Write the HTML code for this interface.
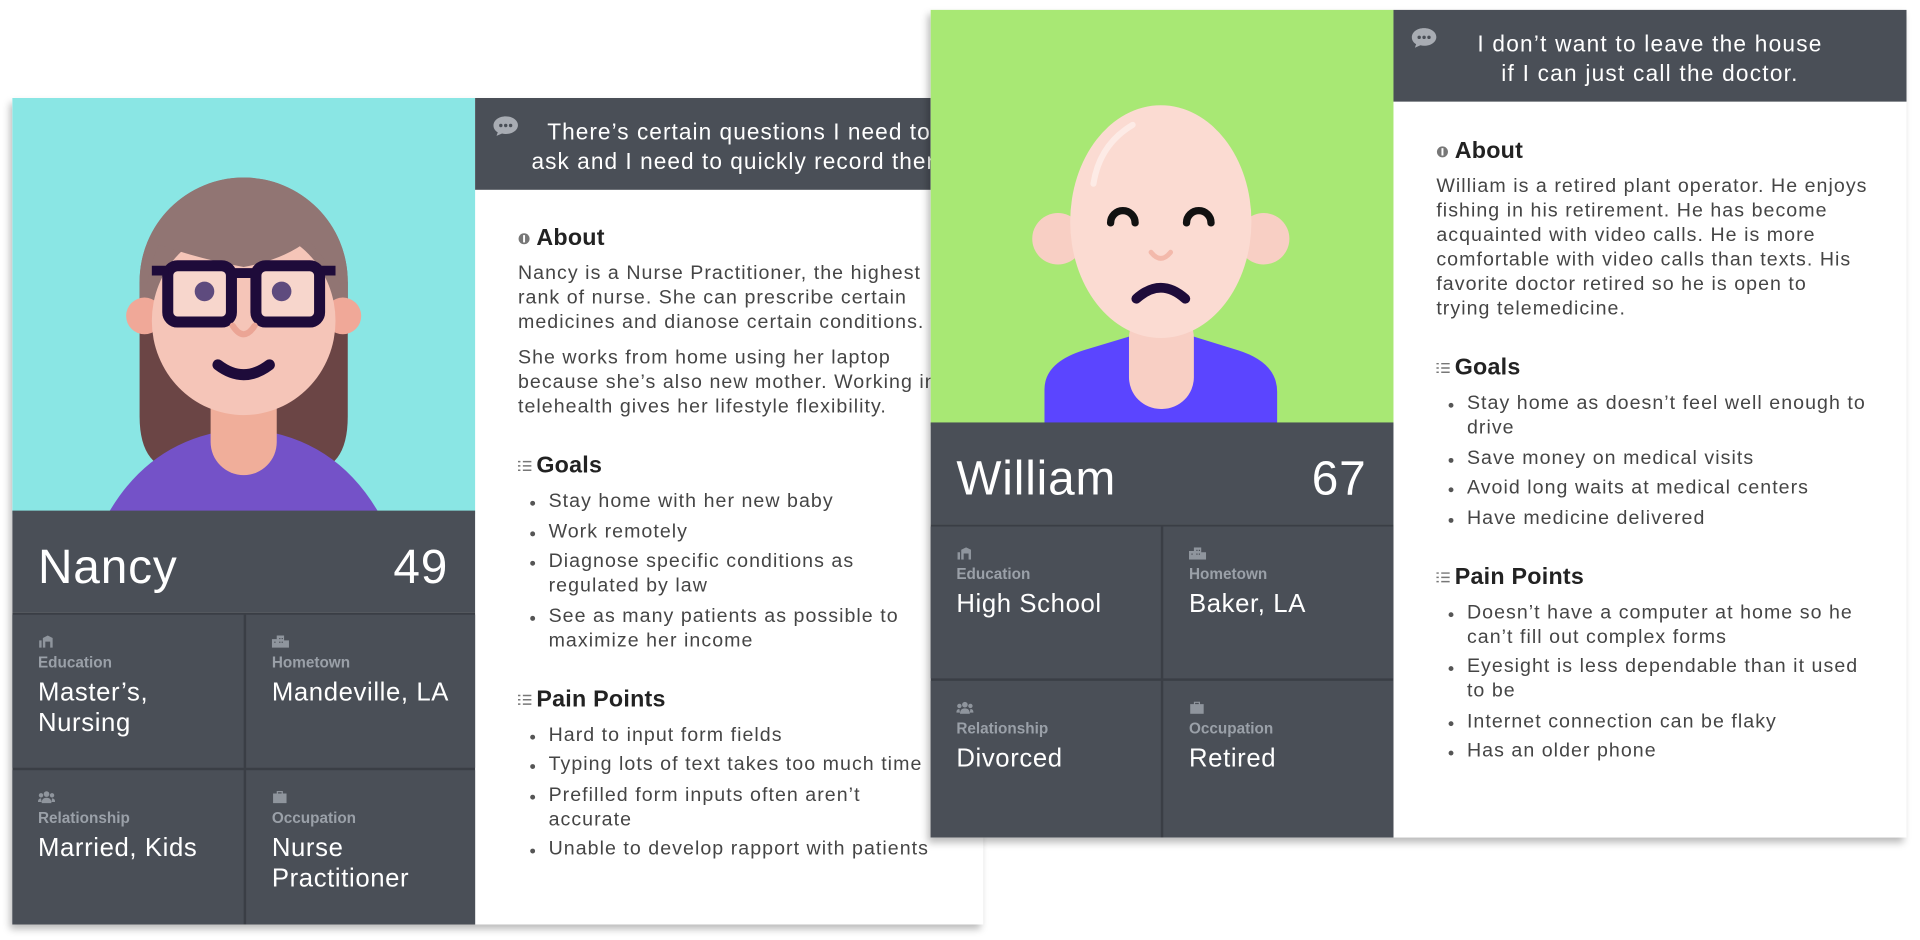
<!DOCTYPE html>
<html><head><meta charset="utf-8"><style>
*{margin:0;padding:0;box-sizing:border-box}
body{width:1920px;height:940px;background:#fff;overflow:hidden;font-family:"Liberation Sans",sans-serif}
#s{position:absolute;left:0;top:0;width:1568px;height:768px;transform:scale(1.22449);transform-origin:0 0}
.card{position:absolute;background:#fff;box-shadow:-2px 4px 6px rgba(0,0,0,.28);overflow:hidden}
.photo{position:absolute;left:0;top:0;width:378px;height:340px}
.quote{position:absolute;left:378px;top:0;height:75px;background:#4a4f57;color:#fff;font-size:18.5px;line-height:24px;text-align:center;padding-top:16px;white-space:nowrap;letter-spacing:.85px}
.qi{position:absolute;left:14px;top:14px}
.name{position:absolute;left:0;top:337px;width:378px;height:83px;background:#4a4f57;color:#fff;font-size:39px;display:flex;justify-content:space-between;align-items:center;padding:10px 22px 0 21px;letter-spacing:.7px}
.grid{position:absolute;left:0;width:378px;background:#3a3e45}
.cell{position:absolute;background:#4a4f57;padding:14px 0 0 21px;color:#fff}
.lab{font-size:12.5px;font-weight:bold;color:#9aa0a8;margin-top:0}
.ic{height:10px}
.val{font-size:21px;line-height:25px;margin-top:5px;letter-spacing:.5px}
.content{position:absolute;left:413px;color:#454545;font-size:16px;white-space:nowrap;letter-spacing:.85px}
.h{font-size:19px;font-weight:bold;color:#222;line-height:20px;margin-bottom:9px;position:relative;letter-spacing:.2px;padding-left:15px}
.h svg{position:absolute;left:0;top:5px}
.p{line-height:20px;margin-bottom:9px}
.sec{margin-top:28px}
ul{list-style:none;padding-left:25px}
li{line-height:20px;margin-bottom:4.5px;position:relative}
li:before{content:"";position:absolute;left:-15px;top:9px;width:4px;height:4px;border-radius:50%;background:#555}
</style></head><body>
<div id="s">

<!-- Nancy card -->
<div class="card" style="left:10px;top:80px;width:793px;height:675px">
  <div class="photo" style="background:#8ae6e4">
    <svg width="378" height="340" viewBox="10 80 378 340">
      <path d="M114,230 L114,340 Q114,385 150,385 L250,385 Q284,385 284,340 L284,230 Z" fill="#6b4545"/>
      <path d="M114,250 L114,230 A85,85 0 0 1 284,230 L284,250 Z" fill="#917573"/>
      <path d="M88,420 Q125,355 199,350 Q273,355 310,420 Z" fill="#7452c8"/>
      <circle cx="118" cy="258" r="15" fill="#f0a898"/>
      <circle cx="280" cy="258" r="15" fill="#f0a898"/>
      <rect x="172" y="290" width="54" height="98" rx="27" fill="#f0ae9a"/>
      <ellipse cx="199" cy="262" rx="75" ry="77" fill="#f5c5b8"/>
      <path d="M120,232 Q126,205 130,200 Q165,212 199,218 Q232,212 252,196 Q268,214 278,232 L284,230 A85,85 0 0 0 114,230 Z" fill="#917573"/>
      <rect x="137" y="217" width="52" height="46" rx="8" fill="#f7d6cc" stroke="#1e0b3a" stroke-width="9"/>
      <rect x="209" y="217" width="52" height="46" rx="8" fill="#f7d6cc" stroke="#1e0b3a" stroke-width="9"/>
      <path d="M186,223 L212,223 M124,221 L138,221 M260,221 L274,221" stroke="#1e0b3a" stroke-width="8"/>
      <circle cx="167" cy="238" r="8" fill="#5e4b7e"/>
      <circle cx="230" cy="238" r="8" fill="#5e4b7e"/>
      <path d="M190,266 Q199,280 208,266" stroke="#eba595" stroke-width="5" fill="none" stroke-linecap="round"/>
      <path d="M178,298 Q199,314 220,298" stroke="#1e0b3a" stroke-width="9" fill="none" stroke-linecap="round"/>
    </svg>
  </div>
  <div class="name"><span>Nancy</span><span>49</span></div>
  <div class="grid" style="top:420px;height:255px">
    <div class="cell" style="left:0;top:2px;width:189px;height:125px"><svg class="ic" width="14" height="10"><path d="M1,10V4h2v6zM4,10V2l4-2 4,2v8h-2V5H6v5z" fill="#8f959d"/></svg><div class="lab">Education</div><div class="val">Master’s,<br>Nursing</div></div>
    <div class="cell" style="left:191px;top:2px;width:187px;height:125px"><svg class="ic" width="14" height="10"><path d="M0,10V3h4V0h6v4h4v6zM2,5v1h1V5zM6,2v1h1V2zM8,2v1h1V2zM6,5v1h1V5zM8,5v1h1V5z" fill="#8f959d"/></svg><div class="lab">Hometown</div><div class="val">Mandeville, LA</div></div>
    <div class="cell" style="left:0;top:129px;width:189px;height:126px"><svg class="ic" width="14" height="10"><circle cx="7" cy="2.5" r="2.3" fill="#8f959d"/><circle cx="2.5" cy="3.5" r="1.8" fill="#8f959d"/><circle cx="11.5" cy="3.5" r="1.8" fill="#8f959d"/><path d="M3,10Q3,5.5 7,5.5Q11,5.5 11,10zM0,9Q0,6 2.5,6L3,9zM14,9Q14,6 11.5,6L11,9z" fill="#8f959d"/></svg><div class="lab">Relationship</div><div class="val">Married, Kids</div></div>
    <div class="cell" style="left:191px;top:129px;width:187px;height:126px"><svg class="ic" width="14" height="10"><path d="M4,2V0h5v2h3v8H1V2zM5,1v1h3V1z" fill="#8f959d"/></svg><div class="lab">Occupation</div><div class="val">Nurse<br>Practitioner</div></div>
  </div>
  <div class="quote" style="width:415px;padding-left:16px"><svg class="qi" width="22" height="18"><path d="M11,1C5,1 1,4.5 1,8.5C1,11 2.5,13 4.5,14L3.5,17L8,15C9,15.3 10,15.4 11,15.4C17,15.4 21,12 21,8.2C21,4.5 17,1 11,1Z" fill="#a8acb3"/><circle cx="7" cy="8.5" r="1.4" fill="#4a4f57"/><circle cx="11" cy="8.5" r="1.4" fill="#4a4f57"/><circle cx="15" cy="8.5" r="1.4" fill="#4a4f57"/></svg>There’s certain questions I need to<br>ask and I need to quickly record them</div>
  <div class="content" style="top:105px">
    <div class="h"><svg width="10" height="10"><circle cx="5" cy="5" r="4.5" fill="#777"/><rect x="4.2" y="2" width="1.6" height="6" fill="#fff"/></svg>About</div>
    <div class="p">Nancy is a Nurse Practitioner, the highest<br>rank of nurse. She can prescribe certain<br>medicines and dianose certain conditions.</div>
    <div class="p">She works from home using her laptop<br>because she’s also new mother. Working in<br>telehealth gives her lifestyle flexibility.</div>
    <div class="h sec"><svg width="11" height="9"><path d="M0,1h2M4,1h7M0,4.5h2M4,4.5h7M0,8h2M4,8h7" stroke="#777" stroke-width="1.2"/></svg>Goals</div>
    <ul><li>Stay home with her new baby</li><li>Work remotely</li><li>Diagnose specific conditions as<br>regulated by law</li><li>See as many patients as possible to<br>maximize her income</li></ul>
    <div class="h sec"><svg width="11" height="9"><path d="M0,1h2M4,1h7M0,4.5h2M4,4.5h7M0,8h2M4,8h7" stroke="#777" stroke-width="1.2"/></svg>Pain Points</div>
    <ul><li>Hard to input form fields</li><li>Typing lots of text takes too much time</li><li>Prefilled form inputs often aren’t<br>accurate</li><li>Unable to develop rapport with patients</li></ul>
  </div>
</div>

<!-- William card -->
<div class="card" style="left:760px;top:8px;width:797px;height:676px">
  <div class="photo" style="background:#a8e874">
    <svg width="378" height="340" viewBox="760 8 378 340">
      <path d="M853,348 L853,318 Q853,296 885,286 L925,274 L972,274 L1011,286 Q1043,296 1043,320 L1043,348 Z" fill="#5b45ff"/>
      <circle cx="864" cy="195" r="21" fill="#f8cfc4"/>
      <circle cx="1032" cy="195" r="21" fill="#f8cfc4"/>
      <rect x="922" y="250" width="53" height="84" rx="26" fill="#f8cfc4"/>
      <ellipse cx="948" cy="181" rx="74" ry="95" fill="#fbdbd2"/>
      <path d="M893,150 Q898,118 925,102" stroke="#fff" stroke-opacity=".45" stroke-width="5" fill="none" stroke-linecap="round"/>
      <path d="M907,182 A10,10 0 0 1 927,182 M969,182 A10,10 0 0 1 989,182" stroke="#111" stroke-width="6" fill="none" stroke-linecap="round"/>
      <path d="M940,206 Q948,216 956,206" stroke="#f3b9ab" stroke-width="4" fill="none" stroke-linecap="round"/>
      <path d="M928,244 Q948,226 968,244" stroke="#1e0b3a" stroke-width="8" fill="none" stroke-linecap="round"/>
    </svg>
  </div>
  <div class="name" style="padding-left:21px"><span>William</span><span>67</span></div>
  <div class="grid" style="top:420px;height:256px">
    <div class="cell" style="left:0;top:2px;width:188px;height:124px;padding-top:14px"><svg class="ic" width="14" height="10"><path d="M1,10V4h2v6zM4,10V2l4-2 4,2v8h-2V5H6v5z" fill="#8f959d"/></svg><div class="lab">Education</div><div class="val">High School</div></div>
    <div class="cell" style="left:190px;top:2px;width:188px;height:124px;padding-top:14px"><svg class="ic" width="14" height="10"><path d="M0,10V3h4V0h6v4h4v6zM2,5v1h1V5zM6,2v1h1V2zM8,2v1h1V2zM6,5v1h1V5zM8,5v1h1V5z" fill="#8f959d"/></svg><div class="lab">Hometown</div><div class="val">Baker, LA</div></div>
    <div class="cell" style="left:0;top:128px;width:188px;height:128px;padding-top:14px"><svg class="ic" width="14" height="10"><circle cx="7" cy="2.5" r="2.3" fill="#8f959d"/><circle cx="2.5" cy="3.5" r="1.8" fill="#8f959d"/><circle cx="11.5" cy="3.5" r="1.8" fill="#8f959d"/><path d="M3,10Q3,5.5 7,5.5Q11,5.5 11,10zM0,9Q0,6 2.5,6L3,9zM14,9Q14,6 11.5,6L11,9z" fill="#8f959d"/></svg><div class="lab">Relationship</div><div class="val">Divorced</div></div>
    <div class="cell" style="left:190px;top:128px;width:188px;height:128px;padding-top:14px"><svg class="ic" width="14" height="10"><path d="M4,2V0h5v2h3v8H1V2zM5,1v1h3V1z" fill="#8f959d"/></svg><div class="lab">Occupation</div><div class="val">Retired</div></div>
  </div>
  <div class="quote" style="width:419px;padding-left:0;letter-spacing:1px"><svg class="qi" width="22" height="18"><path d="M11,1C5,1 1,4.5 1,8.5C1,11 2.5,13 4.5,14L3.5,17L8,15C9,15.3 10,15.4 11,15.4C17,15.4 21,12 21,8.2C21,4.5 17,1 11,1Z" fill="#a8acb3"/><circle cx="7" cy="8.5" r="1.4" fill="#4a4f57"/><circle cx="11" cy="8.5" r="1.4" fill="#4a4f57"/><circle cx="15" cy="8.5" r="1.4" fill="#4a4f57"/></svg>I don’t want to leave the house<br>if I can just call the doctor.</div>
  <div class="content" style="top:106px">
    <div class="h"><svg width="10" height="10"><circle cx="5" cy="5" r="4.5" fill="#777"/><rect x="4.2" y="2" width="1.6" height="6" fill="#fff"/></svg>About</div>
    <div class="p">William is a retired plant operator. He enjoys<br>fishing in his retirement. He has become<br>acquainted with video calls. He is more<br>comfortable with video calls than texts. His<br>favorite doctor retired so he is open to<br>trying telemedicine.</div>
    <div class="h sec"><svg width="11" height="9"><path d="M0,1h2M4,1h7M0,4.5h2M4,4.5h7M0,8h2M4,8h7" stroke="#777" stroke-width="1.2"/></svg>Goals</div>
    <ul><li>Stay home as doesn’t feel well enough to<br>drive</li><li>Save money on medical visits</li><li>Avoid long waits at medical centers</li><li>Have medicine delivered</li></ul>
    <div class="h sec"><svg width="11" height="9"><path d="M0,1h2M4,1h7M0,4.5h2M4,4.5h7M0,8h2M4,8h7" stroke="#777" stroke-width="1.2"/></svg>Pain Points</div>
    <ul><li>Doesn’t have a computer at home so he<br>can’t fill out complex forms</li><li>Eyesight is less dependable than it used<br>to be</li><li>Internet connection can be flaky</li><li>Has an older phone</li></ul>
  </div>
</div>

</div>
</body></html>
